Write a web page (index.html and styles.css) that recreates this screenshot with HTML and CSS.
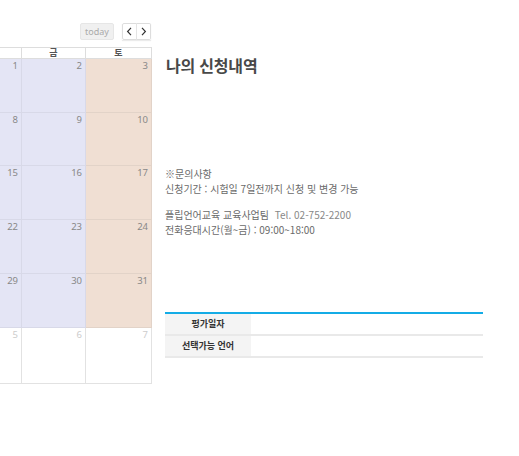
FILE: index.html
```html
<!DOCTYPE html>
<html lang="ko">
<head>
<meta charset="utf-8">
<title>나의 신청내역</title>
<link rel="stylesheet" href="styles.css">
</head>
<body>
<div class="page">
  <div class="cal-clip">
    <div class="calendar">
      <div class="toolbar">
        <button class="btn btn-today" disabled>today</button>
        <div class="btn-group">
          <button class="btn btn-nav" aria-label="prev"><svg width="7" height="9" viewBox="0 0 7 9"><path d="M5 0.8 L1.6 4.5 L5 8.2" fill="none" stroke="#333" stroke-width="1.2"/></svg></button>
          <button class="btn btn-nav" aria-label="next"><svg width="7" height="9" viewBox="0 0 7 9"><path d="M2 0.8 L5.4 4.5 L2 8.2" fill="none" stroke="#333" stroke-width="1.2"/></svg></button>
        </div>
      </div>
      <div class="cal-grid">
        <div class="hd">일</div><div class="hd">월</div><div class="hd">화</div><div class="hd">수</div><div class="hd">목</div><div class="hd">금</div><div class="hd">토</div>

        <div class="day other">27</div><div class="day other">28</div><div class="day other">29</div><div class="day other">30</div><div class="day wk">1</div><div class="day wk">2</div><div class="day sat">3</div>
        <div class="day sun">4</div><div class="day wk">5</div><div class="day wk">6</div><div class="day wk">7</div><div class="day wk">8</div><div class="day wk">9</div><div class="day sat">10</div>
        <div class="day sun">11</div><div class="day wk">12</div><div class="day wk">13</div><div class="day wk">14</div><div class="day wk">15</div><div class="day wk">16</div><div class="day sat">17</div>
        <div class="day sun">18</div><div class="day wk">19</div><div class="day wk">20</div><div class="day wk">21</div><div class="day wk">22</div><div class="day wk">23</div><div class="day sat">24</div>
        <div class="day sun">25</div><div class="day wk">26</div><div class="day wk">27</div><div class="day wk">28</div><div class="day wk">29</div><div class="day wk">30</div><div class="day sat">31</div>
        <div class="day other">1</div><div class="day other">2</div><div class="day other">3</div><div class="day other">4</div><div class="day other">5</div><div class="day other">6</div><div class="day other">7</div>
      </div>
    </div>
  </div>

  <div class="panel">
    <h2 class="title">나의 신청내역</h2>
    <div class="info">
      <p>※문의사항<br>신청기간 : 시험일 7일전까지 신청 및 변경 가능</p>
      <p>플립언어교육 교육사업팀 <span class="tel">Tel. 02-752-2200</span><br>전화응대시간(월~금) : 09:00~18:00</p>
    </div>
    <div class="apply-table">
      <div class="th">평가일자</div><div class="td"></div>
      <div class="th">선택가능 언어</div><div class="td"></div>
    </div>
  </div>
</div>
</body>
</html>
```

FILE: styles.css
```css
html, body {
  margin: 0;
  padding: 0;
  background: #fff;
  overflow: hidden;
}
body {
  font-family: "Noto Sans", "Noto Sans CJK KR", sans-serif;
  color: #555;
}
.page {
  display: flex;
  align-items: flex-start;
  gap: 13px;
  padding-top: 23px;
}
.cal-clip {
  width: 152px;
  overflow: hidden;
  flex: none;
}
.calendar {
  width: 456px;
  margin-left: -304px;
}
.toolbar {
  display: flex;
  justify-content: flex-end;
  gap: 8px;
  height: 17px;
  margin-bottom: 7px;
  padding-right: 1px;
}
.btn {
  font-family: "Noto Sans", sans-serif;
  font-size: 9px;
  line-height: 15px;
  height: 17px;
  padding: 0;
  border: 1px solid #ddd;
  border-radius: 2px;
  background: #fff;
  color: #444;
  box-sizing: border-box;
}
.btn-today {
  width: 34px;
  background: #f0f0f0;
  border-color: #e6e6e6;
  color: #aaa;
}
.btn-group {
  display: flex;
  box-shadow: 0 1px 1px rgba(0,0,0,0.08);
}
.btn-nav {
  width: 15px;
  display: flex;
  align-items: center;
  justify-content: center;
}
.btn-nav:first-child {
  border-radius: 2px 0 0 2px;
}
.btn-nav:last-child {
  border-left: 1px solid #e4e4e4;
  margin-left: -1px;
  border-radius: 0 2px 2px 0;
}
.cal-grid {
  display: grid;
  grid-template-columns: 65px 65px 65px 65px 65px 64px 66px;
  grid-template-rows: 11px 54px 53px 54px 54px 54px 56px;
  border-left: 1px solid #ddd;
  border-top: 1px solid #ddd;
  width: 456px;
  box-sizing: border-box;
}
.hd, .day {
  border-right: 1px solid #ddd;
  border-bottom: 1px solid #ddd;
}
.hd {
  font-family: "Noto Sans CJK KR", sans-serif;
  font-size: 9px;
  font-weight: 700;
  line-height: 10px;
  text-align: center;
  color: #555;
  background: #fff;
}
.day {
  font-size: 9.5px;
  line-height: 12px;
  text-align: right;
  padding: 1px 3px 0 0;
  color: #888;
}
.day.wk {
  background: #e4e5f5;
  border-color: #d8d9e8;
}
.day.sat {
  background: #f0dfd3;
  border-color: #e2d3c8;
}
.day.sun {
  background: #f5dfdf;
}
.day.other {
  background: #fff;
  color: #ccc;
  border-color: #e2e2e2;
}
.panel {
  width: 318px;
  flex: none;
  display: flex;
  flex-direction: column;
}
.title {
  margin: 31px 0 0 1px;
  font-family: "Noto Sans CJK KR", sans-serif;
  font-size: 16px;
  line-height: 22px;
  font-weight: 700;
  color: #484848;
  letter-spacing: -0.2px;
}
.info {
  margin-top: 90px;
  font-family: "Noto Sans CJK KR", sans-serif;
  font-size: 10px;
  line-height: 15px;
  color: #6a6a6a;
}
.info p {
  margin: 0 0 11px 0;
}
.tel {
  margin-left: 3px;
  color: #888;
}
.apply-table {
  margin-top: 64px;
  display: grid;
  grid-template-columns: 86px 1fr;
  border-top: 2px solid #14ace6;
}
.th, .td {
  height: 20px;
  border-bottom: 2px solid #e9e9e9;
}
.th {
  background: #f4f4f4;
  font-family: "Noto Sans CJK KR", sans-serif;
  font-size: 9px;
  font-weight: 700;
  line-height: 20px;
  text-align: center;
  color: #333;
}
.td {
  background: #fff;
}
```
